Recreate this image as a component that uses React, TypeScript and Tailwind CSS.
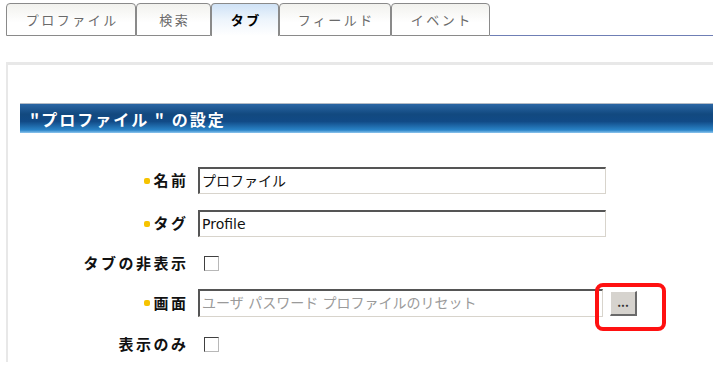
import React from "react";

const jp = { fontFamily: '"Noto Sans CJK JP", "Noto Sans", sans-serif' };
const inputFont = { fontFamily: '"DejaVu Sans", "Noto Sans CJK JP", sans-serif' };

function Tab({ label, active, w }: { label: string; active?: boolean; w: string }) {
  return (
    <div
      className={
        (active
          ? "bg-[linear-gradient(to_bottom,#cfe2f6_0%,#eef5fc_50%,#ffffff_100%)] border-b-0 text-black font-bold "
          : "bg-[linear-gradient(to_bottom,#f2f2ee_0%,#ffffff_60%)] border-b border-b-[#8a8a8a] text-[#6a6a6a] ") +
        "h-[33px] flex items-center justify-center border-t border-l border-r border-[#8a8a8a] rounded-t-[4px] text-[13px] " +
        w
      }
    >
      <span className="tracking-[2.5px] -mr-[2.5px]">{label}</span>
    </div>
  );
}

function Label({ text, bullet }: { text: string; bullet?: boolean }) {
  return (
    <div className="w-[166px] mr-[12px] flex items-center justify-end text-[15px] font-bold text-[#111]">
      {bullet && <span className="w-[6px] h-[6px] rounded-[2px] bg-[#f6c300] mr-[3px]" />}
      <span className="tracking-[2.5px] -mr-[2.5px]">{text}</span>
    </div>
  );
}

function Input({ value, w, gray }: { value: string; w: string; gray?: boolean }) {
  return (
    <div
      style={inputFont}
      className={
        "h-full bg-white border-t-2 border-l-2 border-t-[#555] border-l-[#555] border-b border-r border-b-[#d8d4cc] border-r-[#d8d4cc] flex items-center pl-[2px] text-[14px] whitespace-nowrap overflow-hidden " +
        (gray ? "text-[#9a9a9a] " : "text-[#111] ") +
        w
      }
    >
      {value}
    </div>
  );
}

function Check() {
  return (
    <div className="ml-[6px] w-[15px] h-[15px] bg-white border-t border-l border-t-[#404040] border-l-[#404040] border-b border-r border-b-[#b8b8b8] border-r-[#b8b8b8]" />
  );
}

export default function App() {
  return (
    <div className="w-[722px] h-[366px] bg-white relative overflow-hidden" style={jp}>
      <div className="flex items-end pl-[6px] pt-[3px] pr-[9px]">
        <Tab label="プロファイル" w="w-[130px]" />
        <Tab label="検索" w="w-[75px]" />
        <Tab label="タブ" active w="w-[68px]" />
        <Tab label="フィールド" w="w-[112px]" />
        <Tab label="イベント" w="w-[99px]" />
        <div className="flex-1 h-[33px] border-b border-b-[#6f7fb5]" />
      </div>

      <div className="mt-[26px] ml-[6px] mr-[9px] border-t-[3px] border-l-[2px] border-[#e8e8e8] pl-[12px] pt-[38px] h-[300px]">
        <div className="h-[30px] border-t border-t-[#b4bcc6] bg-[linear-gradient(to_bottom,#2a66a4_0%,#12497f_35%,#114a86_60%,#2a84c8_90%,#8ec6ee_100%)] flex items-center pl-[10px] text-white text-[16px] font-bold tracking-[2px] whitespace-pre">
          "プロファイル " の設定
        </div>

        <div className="flex mt-[34px] h-[27px]">
          <Label text="名前" bullet />
          <Input value="プロファイル" w="w-[408px]" />
        </div>
        <div className="flex mt-[16px] h-[27px]">
          <Label text="タグ" bullet />
          <Input value="Profile" w="w-[408px]" />
        </div>
        <div className="flex mt-[19px] h-[15px] items-center">
          <Label text="タブの非表示" />
          <Check />
        </div>
        <div className="flex mt-[18px] h-[28px] items-center">
          <Label text="画面" bullet />
          <Input value="ユーザ パスワード プロファイルのリセット" w="w-[405px]" gray />
          <button className="ml-[7px] w-[27px] h-[25px] bg-[#d6d3ce] border-t border-l border-t-white border-l-white border-b-2 border-r-2 border-b-[#6a6a6a] border-r-[#6a6a6a] text-[12px] font-bold leading-none text-[#333] flex items-center justify-center pb-[2px]">
            ...
          </button>
        </div>
        <div className="flex mt-[20px] h-[15px] items-center">
          <Label text="表示のみ" />
          <Check />
        </div>
      </div>

      <div className="absolute left-[595px] top-[283px] w-[71px] h-[48px] border-[4px] border-[#ff1111] rounded-[8px]" />
    </div>
  );
}
